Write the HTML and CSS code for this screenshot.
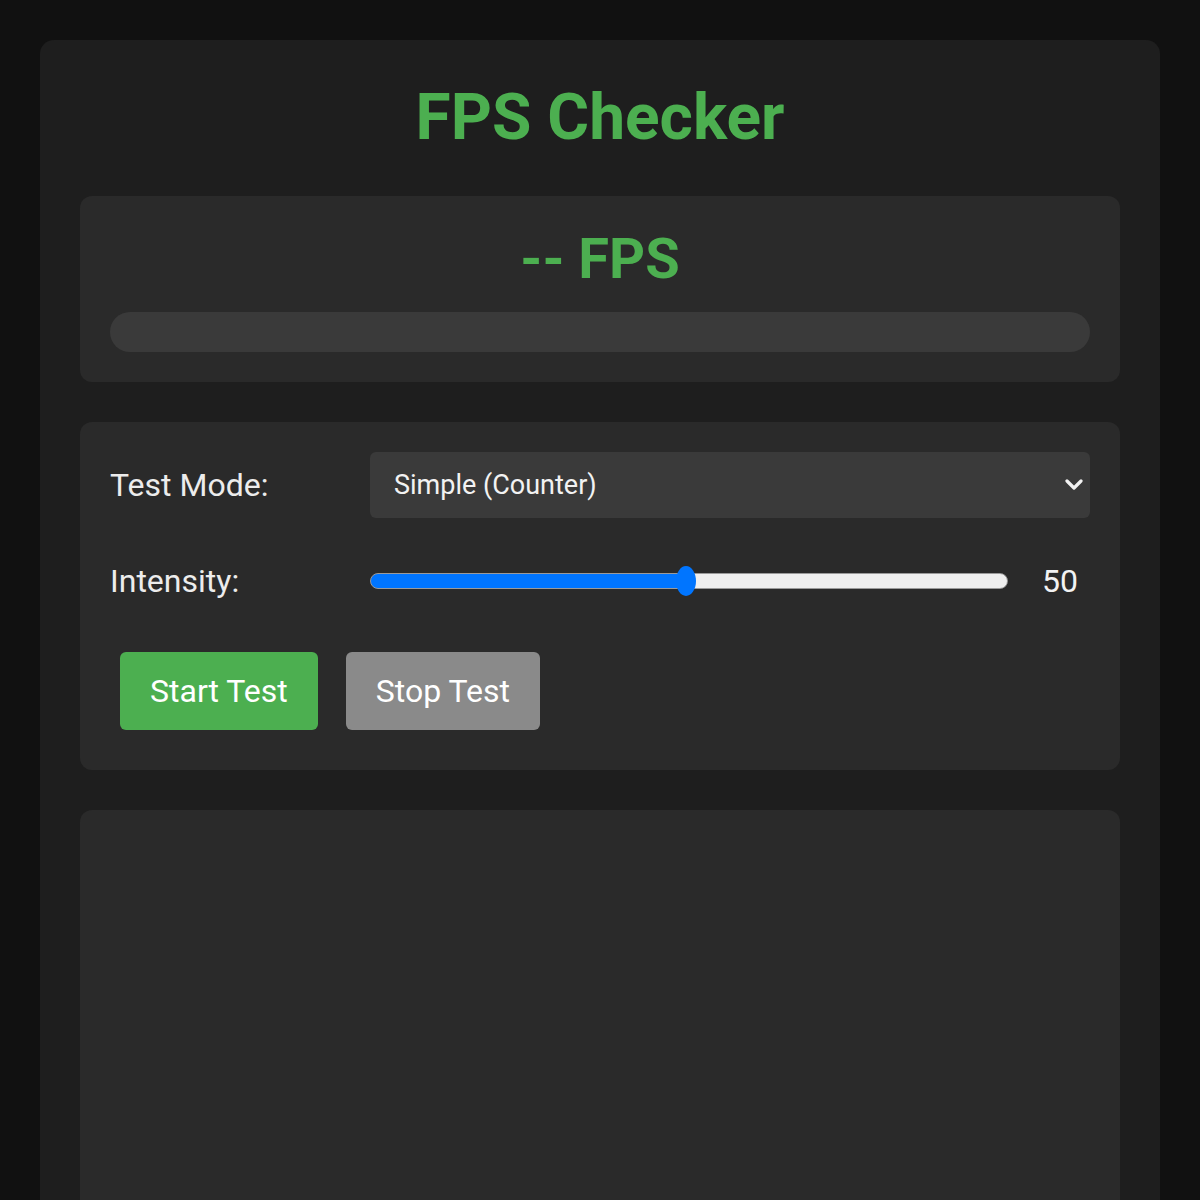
FILE: index.html
```html
<!DOCTYPE html>
<html lang="en">
<head>
    <meta charset="UTF-8">
    <meta name="viewport" content="width=device-width, initial-scale=1.0">
    <title>FPS Checker</title>
    <link rel="stylesheet" href="styles.css">
</head>
<body>
    <div class="container">
        <h1>FPS Checker</h1>

        <div class="panel fps-panel">
            <div class="fps-value" id="fpsValue">-- FPS</div>
            <div class="fps-bar"><div class="fps-fill" id="fpsFill"></div></div>
        </div>

        <div class="panel controls">
            <div class="row">
                <label class="row-label" for="mode">Test Mode:</label>
                <div class="select-wrap">
                    <select id="mode">
                        <option>Simple (Counter)</option>
                        <option>Canvas (Particles)</option>
                        <option>DOM (Boxes)</option>
                    </select>
                    <svg class="chevron" width="18" height="12" viewBox="0 0 18 12">
                        <path d="M2 2 L9 9 L16 2" fill="none" stroke="#f2f2f2" stroke-width="3.2" stroke-linecap="round" stroke-linejoin="round"/>
                    </svg>
                </div>
            </div>
            <div class="row">
                <label class="row-label" for="intensity">Intensity:</label>
                <input type="range" id="intensity" min="1" max="100" value="50">
                <span class="range-value" id="intensityValue">50</span>
            </div>
            <div class="buttons">
                <button class="btn btn-start" id="startBtn">Start Test</button>
                <button class="btn btn-stop" id="stopBtn">Stop Test</button>
            </div>
        </div>

        <div class="panel stage" id="stage"></div>
    </div>
</body>
</html>
```

FILE: styles.css
```css
body {
    margin: 0;
    padding: 40px;
    background: #111111;
    font-family: Roboto, 'Liberation Sans', sans-serif;
    color: #e8e8e8;
}

.container {
    background: #1e1e1e;
    border-radius: 14px;
    padding: 40px;
}

h1 {
    margin: 0 0 40px;
    text-align: center;
    color: #4caf50;
    font-size: 64px;
    font-weight: 700;
    line-height: 76px;
}

.panel {
    background: #2a2a2a;
    border-radius: 12px;
    padding: 30px;
    margin-bottom: 40px;
}

.fps-value {
    text-align: center;
    color: #4caf50;
    font-size: 56px;
    font-weight: 700;
    line-height: 66px;
    margin-bottom: 20px;
}

.fps-bar {
    height: 40px;
    border-radius: 20px;
    background: #3a3a3a;
    overflow: hidden;
}

.fps-fill {
    width: 0;
    height: 100%;
    background: #4caf50;
}

.row {
    display: flex;
    align-items: center;
    min-height: 66px;
    margin-bottom: 30px;
}

.row-label {
    width: 260px;
    flex-shrink: 0;
    font-size: 32px;
    color: #ececec;
}

.select-wrap {
    position: relative;
    flex: 1;
}

select {
    width: 100%;
    height: 66px;
    appearance: none;
    -webkit-appearance: none;
    background: #3a3a3a;
    color: #f2f2f2;
    border: none;
    border-radius: 6px;
    padding: 0 24px;
    font-family: inherit;
    font-size: 27px;
}

.chevron {
    position: absolute;
    right: 7px;
    top: 27px;
    pointer-events: none;
}

input[type="range"] {
    flex: 1;
    margin: 0;
    height: 30px;
    appearance: none;
    -webkit-appearance: none;
    background: transparent;
}

input[type="range"]::-webkit-slider-runnable-track {
    height: 16px;
    border-radius: 8px;
    border: 1px solid #9a9a9a;
    background: linear-gradient(to right, #0075ff 50%, #efefef 50%);
    box-sizing: border-box;
}

input[type="range"]::-webkit-slider-thumb {
    -webkit-appearance: none;
    width: 20px;
    height: 30px;
    border-radius: 50%;
    background: #0075ff;
    margin-top: -8px;
}

.range-value {
    width: 60px;
    margin-left: 22px;
    text-align: center;
    font-size: 32px;
    color: #f2f2f2;
}

.buttons {
    display: flex;
    gap: 28px;
    padding: 8px 10px 10px;
}

.btn {
    border: none;
    border-radius: 6px;
    padding: 20px 30px;
    font-family: inherit;
    font-size: 32px;
    line-height: 38px;
    color: #ffffff;
    cursor: pointer;
}

.btn-start {
    background: #4caf50;
}

.btn-stop {
    background: #8a8a8a;
}

.stage {
    height: 440px;
    margin-bottom: 0;
}
```
